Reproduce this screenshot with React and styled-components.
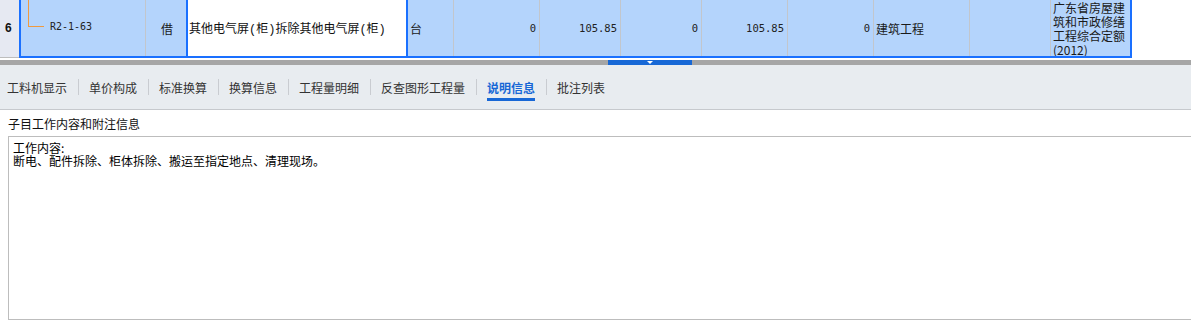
import React from 'react';
import styled, { createGlobalStyle } from 'styled-components';

const GlobalStyle = createGlobalStyle`
  html, body {
    margin: 0;
    padding: 0;
    background: #fff;
    overflow: hidden;
  }
  body {
    font-family: "Noto Sans CJK SC", "Liberation Sans", sans-serif;
    font-size: 12px;
    color: #222;
  }
`;

const Page = styled.div`
  width: 1191px;
  height: 322px;
  display: flex;
  flex-direction: column;
  overflow: hidden;
`;

const GridRow = styled.div`
  display: flex;
  height: 58px;
  flex-shrink: 0;
`;

const RowNum = styled.div`
  width: 19px;
  height: 58px;
  box-sizing: border-box;
  background: #e6e9f2;
  border-bottom: 1px solid #bdbdbd;
  display: flex;
  align-items: center;
  padding-left: 5px;
  padding-bottom: 1px;
  font-family: "Liberation Sans", "DejaVu Sans", sans-serif;
  font-weight: bold;
  font-size: 12px;
  color: #111;
`;

const Selected = styled.div`
  display: flex;
  height: 58px;
  box-sizing: border-box;
  background: #b4d4fc;
  border: 2px solid #1a70ff;
  border-top: 0;
`;

const Cell = styled.div`
  width: ${p => p.w}px;
  box-sizing: border-box;
  border-right: ${p => (p.last ? '0' : '1px solid #c2c6cc')};
  display: flex;
  align-items: center;
  justify-content: ${p => p.align || 'flex-start'};
  padding: 0 ${p => (p.align === 'flex-end' ? '3px' : '0')} 0 ${p => (p.align === 'flex-end' ? '0' : '2px')};
  font-size: 12px;
  color: #1a1a1a;
  white-space: nowrap;
  overflow: hidden;
`;

const EditCell = styled.div`
  width: 222px;
  box-sizing: border-box;
  background: #fff;
  border-left: 2px solid #1a70ff;
  border-right: 2px solid #1a70ff;
  display: flex;
  align-items: center;
  padding-left: 1px;
  font-family: "Liberation Mono", "Noto Sans CJK SC", monospace;
  font-size: 12px;
  color: #111;
  white-space: nowrap;
  overflow: hidden;
`;

const CodeCell = styled.div`
  width: 125px;
  box-sizing: border-box;
  border-right: 1px solid #c2c6cc;
  display: flex;
  align-items: flex-start;
  padding-left: 7px;
`;

const TreeLine = styled.span`
  width: 16px;
  height: 27px;
  border-left: 1px solid #f09a3e;
  border-bottom: 1px solid #f09a3e;
  box-sizing: border-box;
  flex-shrink: 0;
`;

const Mono = styled.span`
  font-family: "DejaVu Sans Mono", "Liberation Mono", monospace;
  font-size: 10.5px;
  color: #222;
`;

const CodeText = styled(Mono)`
  margin: 21px 0 0 6px;
  font-size: 10px;
`;

const WrapCell = styled.div`
  width: 79px;
  box-sizing: border-box;
  display: flex;
  align-items: center;
  padding-left: 2px;
  font-size: 12px;
  line-height: 14px;
  color: #1a1a1a;
  white-space: normal;
  word-break: break-all;
  overflow: hidden;
  padding-top: 2px;
`;

const Gap = styled.div`
  height: 2px;
  flex-shrink: 0;
`;

const Splitter = styled.div`
  height: 5px;
  flex-shrink: 0;
  background: #a6a6a6;
  display: flex;
`;

const Handle = styled.div`
  margin-left: 608px;
  width: 84px;
  background: #1768d6;
  display: flex;
  justify-content: center;
`;

const Arrow = styled.span`
  width: 0;
  height: 0;
  margin-top: 1px;
  border-left: 3px solid transparent;
  border-right: 3px solid transparent;
  border-top: 3px solid #fff;
`;

const TabBar = styled.div`
  height: 45px;
  flex-shrink: 0;
  box-sizing: border-box;
  background: #e8ecf0;
  border-bottom: 1px solid #c6c9cd;
  display: flex;
  align-items: center;
  padding-left: 7px;
`;

const Tab = styled.div`
  font-size: 12px;
  line-height: 17px;
  padding: 2px 0;
  border-top: 3px solid transparent;
  border-bottom: 3px solid ${p => (p.active ? '#1767d6' : 'transparent')};
  color: ${p => (p.active ? '#1767d6' : '#333')};
  font-weight: ${p => (p.active ? 'bold' : 'normal')};
  white-space: nowrap;
`;

const Sep = styled.span`
  width: 1px;
  height: 16px;
  background: #c9ccd1;
  margin: 0 10px 0 11px;
`;

const Caption = styled.div`
  height: 26px;
  flex-shrink: 0;
  display: flex;
  align-items: center;
  padding-left: 8px;
  font-size: 12px;
  color: #111;
`;

const NoteBox = styled.div`
  margin-left: 8px;
  height: 184px;
  flex-shrink: 0;
  box-sizing: border-box;
  border: 1px solid #bdbdbd;
  border-right: 0;
  padding: 4px 4px;
  font-size: 12px;
  line-height: 13px;
  color: #000;
`;

const tabs = ['工料机显示', '单价构成', '标准换算', '换算信息', '工程量明细', '反查图形工程量', '说明信息', '批注列表'];

export default function App() {
  return (
    <Page>
      <GlobalStyle />
      <GridRow>
        <RowNum>6</RowNum>
        <Selected>
          <CodeCell>
            <TreeLine />
            <CodeText>R2-1-63</CodeText>
          </CodeCell>
          <Cell w={40} last align="center">借</Cell>
          <EditCell>其他电气屏(柜)拆除其他电气屏(柜)</EditCell>
          <Cell w={46}>台</Cell>
          <Cell w={86} align="flex-end"><Mono>0</Mono></Cell>
          <Cell w={81} align="flex-end"><Mono>105.85</Mono></Cell>
          <Cell w={81} align="flex-end"><Mono>0</Mono></Cell>
          <Cell w={86} align="flex-end"><Mono>105.85</Mono></Cell>
          <Cell w={86} align="flex-end"><Mono>0</Mono></Cell>
          <Cell w={96}>建筑工程</Cell>
          <Cell w={81} />
          <WrapCell>广东省房屋建筑和市政修缮工程综合定额(2012)</WrapCell>
        </Selected>
      </GridRow>
      <Gap />
      <Splitter>
        <Handle>
          <Arrow />
        </Handle>
      </Splitter>
      <TabBar>
        {tabs.map((t, i) => (
          <React.Fragment key={t}>
            {i > 0 && <Sep />}
            <Tab active={t === '说明信息'}>{t}</Tab>
          </React.Fragment>
        ))}
      </TabBar>
      <Caption>子目工作内容和附注信息</Caption>
      <NoteBox>
        工作内容:
        <br />
        断电、配件拆除、柜体拆除、搬运至指定地点、清理现场。
      </NoteBox>
    </Page>
  );
}
